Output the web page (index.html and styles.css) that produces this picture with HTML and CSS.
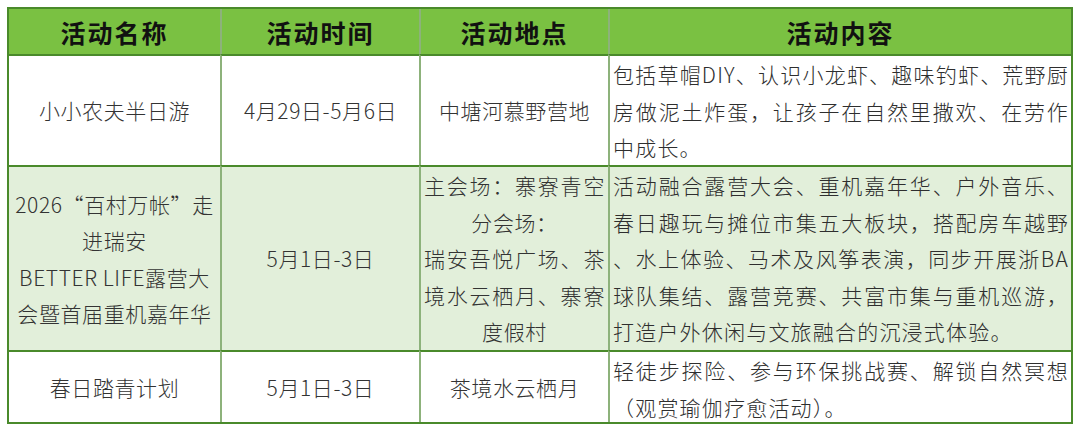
FILE: index.html
```html
<!DOCTYPE html>
<html lang="zh-CN">
<head>
<meta charset="utf-8">
<title>活动表</title>
<link rel="stylesheet" href="styles.css">
</head>
<body>
<div class="tbl">
  <div class="c h first">活动名称</div>
  <div class="c h">活动时间</div>
  <div class="c h">活动地点</div>
  <div class="c h">活动内容</div>

  <div class="c r first">小小农夫半日游</div>
  <div class="c r">4月29日-5月6日</div>
  <div class="c r">中塘河慕野营地</div>
  <div class="c r d">
    <span class="j">包括草帽DIY、认识小龙虾、趣味钓虾、荒野厨</span>
    <span class="j">房做泥土炸蛋，让孩子在自然里撒欢、在劳作</span>
    <span class="l">中成长。</span>
  </div>

  <div class="c r g first">
    <span class="l">2026“百村万帐”走</span>
    <span class="l">进瑞安</span>
    <span class="l">BETTER LIFE露营大</span>
    <span class="l">会暨首届重机嘉年华</span>
  </div>
  <div class="c r g">5月1日-3日</div>
  <div class="c r g place">
    <span class="j">主会场：寨寮青空</span>
    <span class="l">分会场：</span>
    <span class="j">瑞安吾悦广场、茶</span>
    <span class="j">境水云栖月、寨寮</span>
    <span class="l">度假村</span>
  </div>
  <div class="c r g d">
    <span class="j">活动融合露营大会、重机嘉年华、户外音乐、</span>
    <span class="j">春日趣玩与摊位市集五大板块，搭配房车越野</span>
    <span class="j">、水上体验、马术及风筝表演，同步开展浙BA</span>
    <span class="j">球队集结、露营竞赛、共富市集与重机巡游，</span>
    <span class="l">打造户外休闲与文旅融合的沉浸式体验。</span>
  </div>

  <div class="c r first">春日踏青计划</div>
  <div class="c r">5月1日-3日</div>
  <div class="c r">茶境水云栖月</div>
  <div class="c r d">
    <span class="j">轻徒步探险、参与环保挑战赛、解锁自然冥想</span>
    <span class="l">（观赏瑜伽疗愈活动）。</span>
  </div>
</div>
</body>
</html>
```

FILE: styles.css
```css
html, body {
  margin: 0;
  padding: 0;
  background: #ffffff;
}

body {
  font-family: "Noto Sans CJK SC", "Noto Sans", sans-serif;
  color: #333333;
}

.tbl {
  display: grid;
  grid-template-columns: 211px 199px 189px 463px;
  grid-template-rows: 45px 111px 185px 72px;
  width: 1066px;
  box-sizing: border-box;
  border: 2px solid #4a8a2b;
  margin: 7px 0 0 7px;
}

.c {
  box-sizing: border-box;
  border-left: 2px solid #8db27b;
  display: flex;
  flex-direction: column;
  justify-content: center;
  align-items: center;
  text-align: center;
  font-size: 21px;
  font-weight: 300;
  line-height: 36.5px;
  letter-spacing: 0.6px;
  min-width: 0;
}

.c.first {
  border-left: none;
}

.h {
  background: #7ac142;
  color: #111111;
  font-weight: 700;
  font-size: 25px;
  letter-spacing: 2px;
  line-height: 30px;
}

.r {
  border-top: 2px solid #4a8a2b;
}

.g {
  background: #e2efda;
}

.place {
  align-items: stretch;
  padding: 0 3px;
}

.d {
  align-items: stretch;
  justify-content: flex-start;
  text-align: left;
  padding: 0 2px 0 3px;
  font-size: 21px;
  letter-spacing: 1.2px;
  color: #2e2e2e;
}

.j {
  display: block;
  white-space: nowrap;
  text-align: justify;
  text-align-last: justify;
}

.l {
  display: block;
  white-space: nowrap;
}

.place .l {
  text-align: center;
}

.d .l {
  text-align: left;
}
```
